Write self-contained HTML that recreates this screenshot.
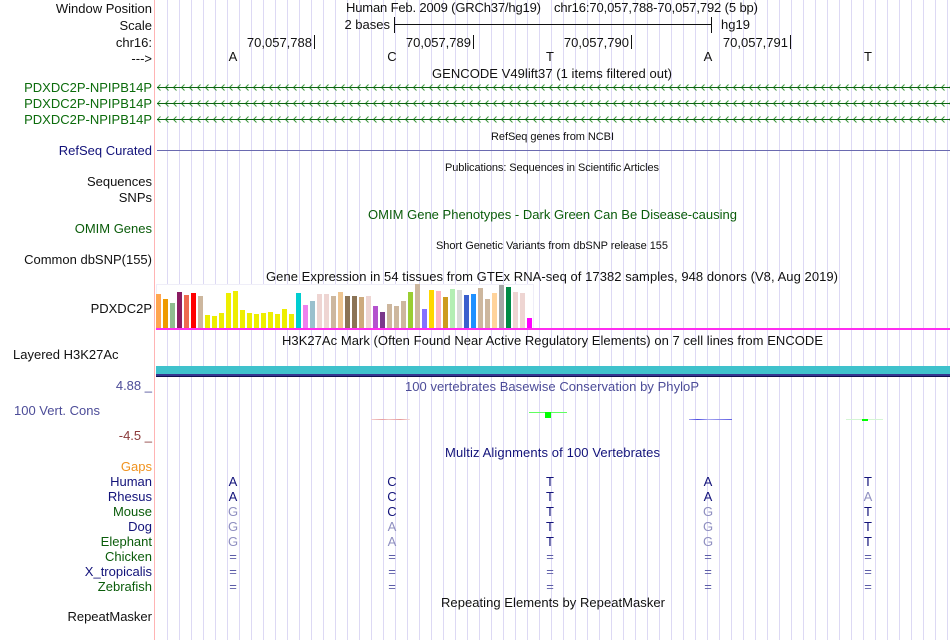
<!DOCTYPE html>
<html><head><meta charset="utf-8"><style>
html,body{margin:0;padding:0;background:#fff;width:950px;height:640px;overflow:hidden}
svg{display:block}
text{font-family:"Liberation Sans",sans-serif;font-size:13px}
.r{text-anchor:end}
.s{font-size:11px}
.k{fill:#111}.g{fill:#0b6b0b}.n{fill:#12127a}.d{fill:#0a5c0a}
.b{font-size:13px;text-anchor:middle}.h{fill:#12127a}.l{fill:#8f8fc0}.m{fill:#5c5ca8}
.c{text-anchor:middle}
</style></head><body>
<svg width="950" height="640" viewBox="0 0 950 640" xmlns="http://www.w3.org/2000/svg">
<defs>
<pattern id="grid" x="167" y="0" width="12" height="640" patternUnits="userSpaceOnUse"><rect x="0" y="0" width="1" height="640" fill="#ddd9f4"/></pattern>
<pattern id="arr" x="157" y="83" width="8" height="9" patternUnits="userSpaceOnUse"><path d="M3.5 1.5 L0.5 4.5 L3.5 7.5" fill="none" stroke="#3d963d" stroke-width="1"/></pattern>
<linearGradient id="rg"><stop offset="0" stop-color="#f4d0d0"/><stop offset=".3" stop-color="#e8a0a0"/><stop offset=".45" stop-color="#f0c4c4"/><stop offset=".75" stop-color="#e69a9a"/><stop offset="1" stop-color="#f8e0e0"/></linearGradient>
<linearGradient id="bg"><stop offset="0" stop-color="#a0a0f0"/><stop offset=".2" stop-color="#4c4ce0"/><stop offset=".45" stop-color="#a8a8f0"/><stop offset="1" stop-color="#6060e4"/></linearGradient>
</defs>
<rect width="950" height="640" fill="#fff"/>
<rect x="160" y="0" width="790" height="640" fill="url(#grid)"/>
<rect x="154" y="0" width="1" height="640" fill="#ffb4b4"/>

<!-- header -->
<text class="r k" x="152" y="13">Window Position</text>
<text class="r k" x="152" y="30">Scale</text>
<text class="r k" x="152" y="47">chr16:</text>
<text class="r k" x="152" y="63">---&gt;</text>
<text class="k" x="346" y="12" textLength="195">Human Feb. 2009 (GRCh37/hg19)</text>
<text class="k" x="554" y="12" textLength="204">chr16:70,057,788-70,057,792 (5 bp)</text>
<text class="r k" x="390" y="29">2 bases</text>
<rect x="394" y="24" width="318" height="1" fill="#111"/>
<rect x="394" y="17" width="1" height="16" fill="#111"/>
<rect x="711" y="17" width="1" height="16" fill="#111"/>
<text class="k" x="721" y="29">hg19</text>
<text class="r k" x="312" y="47">70,057,788</text><rect x="314" y="35" width="1" height="14" fill="#111"/>
<text class="r k" x="471" y="47">70,057,789</text><rect x="473" y="35" width="1" height="14" fill="#111"/>
<text class="r k" x="629" y="47">70,057,790</text><rect x="631" y="35" width="1" height="14" fill="#111"/>
<text class="r k" x="788" y="47">70,057,791</text><rect x="790" y="35" width="1" height="14" fill="#111"/>
<text class="c k" x="233" y="61">A</text><text class="c k" x="392" y="61">C</text><text class="c k" x="550" y="61">T</text><text class="c k" x="708" y="61">A</text><text class="c k" x="868" y="61">T</text>

<!-- gencode -->
<text class="k" x="432" y="78" textLength="240">GENCODE V49lift37 (1 items filtered out)</text>
<text class="r g" x="152" y="92">PDXDC2P-NPIPB14P</text>
<text class="r g" x="152" y="108">PDXDC2P-NPIPB14P</text>
<text class="r g" x="152" y="124">PDXDC2P-NPIPB14P</text>
<rect x="157" y="83" width="793" height="9" fill="url(#arr)"/>
<rect x="157" y="87" width="793" height="1" fill="#0b6410"/>
<g transform="translate(0,16)"><rect x="157" y="83" width="793" height="9" fill="url(#arr)"/><rect x="157" y="87" width="793" height="1" fill="#0b6410"/></g>
<g transform="translate(0,32)"><rect x="157" y="83" width="793" height="9" fill="url(#arr)"/><rect x="157" y="87" width="793" height="1" fill="#0b6410"/></g>

<!-- refseq -->
<text class="k s" x="491" y="140" textLength="123">RefSeq genes from NCBI</text>
<text class="r n" x="152" y="155">RefSeq Curated</text>
<rect x="157" y="150" width="793" height="1" fill="#6a6ab0"/>
<text class="k s" x="445" y="171" textLength="214">Publications: Sequences in Scientific Articles</text>
<text class="r k" x="152" y="186">Sequences</text>
<text class="r k" x="152" y="202">SNPs</text>
<text class="d" x="368" y="219" textLength="369">OMIM Gene Phenotypes - Dark Green Can Be Disease-causing</text>
<text class="r d" x="152" y="233">OMIM Genes</text>
<text class="k s" x="436" y="249" textLength="232">Short Genetic Variants from dbSNP release 155</text>
<text class="r k" x="152" y="264">Common dbSNP(155)</text>
<text class="k" x="266" y="281" textLength="572">Gene Expression in 54 tissues from GTEx RNA-seq of 17382 samples, 948 donors (V8, Aug 2019)</text>
<text class="r k" x="152" y="313">PDXDC2P</text>

<!-- bars -->
<rect x="156.5" y="284.5" width="377" height="44" fill="#fff" stroke="#efeef8" stroke-width="1"/>
<g>
<rect x="156" y="294" width="5" height="34" fill="#ffa54f"/>
<rect x="163" y="299" width="5" height="29" fill="#ee9a00"/>
<rect x="170" y="303" width="5" height="25" fill="#8fbc8f"/>
<rect x="177" y="292" width="5" height="36" fill="#8b1c62"/>
<rect x="184" y="295" width="5" height="33" fill="#ee6a50"/>
<rect x="191" y="293" width="5" height="35" fill="#ff0000"/>
<rect x="198" y="296" width="5" height="32" fill="#cdb79e"/>
<rect x="205" y="315" width="5" height="13" fill="#eeee00"/>
<rect x="212" y="316" width="5" height="12" fill="#eeee00"/>
<rect x="219" y="313" width="5" height="15" fill="#eeee00"/>
<rect x="226" y="293" width="5" height="35" fill="#eeee00"/>
<rect x="233" y="291" width="5" height="37" fill="#eeee00"/>
<rect x="240" y="310" width="5" height="18" fill="#eeee00"/>
<rect x="247" y="313" width="5" height="15" fill="#eeee00"/>
<rect x="254" y="314" width="5" height="14" fill="#eeee00"/>
<rect x="261" y="313" width="5" height="15" fill="#eeee00"/>
<rect x="268" y="312" width="5" height="16" fill="#eeee00"/>
<rect x="275" y="314" width="5" height="14" fill="#eeee00"/>
<rect x="282" y="309" width="5" height="19" fill="#eeee00"/>
<rect x="289" y="314" width="5" height="14" fill="#eeee00"/>
<rect x="296" y="293" width="5" height="35" fill="#00ced1"/>
<rect x="303" y="305" width="5" height="23" fill="#ee82ee"/>
<rect x="310" y="301" width="5" height="27" fill="#9ac0cd"/>
<rect x="317" y="294" width="5" height="34" fill="#eed5d2"/>
<rect x="324" y="294" width="5" height="34" fill="#eed5d2"/>
<rect x="331" y="296" width="5" height="32" fill="#cdb79e"/>
<rect x="338" y="292" width="5" height="36" fill="#eec591"/>
<rect x="345" y="296" width="5" height="32" fill="#8b7355"/>
<rect x="352" y="296" width="5" height="32" fill="#8b7355"/>
<rect x="359" y="297" width="5" height="31" fill="#cdaa7d"/>
<rect x="366" y="296" width="5" height="32" fill="#eed5d2"/>
<rect x="373" y="306" width="5" height="22" fill="#b452cd"/>
<rect x="380" y="312" width="5" height="16" fill="#7a378b"/>
<rect x="387" y="304" width="5" height="24" fill="#cdb79e"/>
<rect x="394" y="306" width="5" height="22" fill="#cdb79e"/>
<rect x="401" y="301" width="5" height="27" fill="#cdb79e"/>
<rect x="408" y="292" width="5" height="36" fill="#9acd32"/>
<rect x="415" y="284" width="5" height="44" fill="#cdb79e"/>
<rect x="422" y="309" width="5" height="19" fill="#8470ff"/>
<rect x="429" y="290" width="5" height="38" fill="#ffd700"/>
<rect x="436" y="291" width="5" height="37" fill="#ffb6c1"/>
<rect x="443" y="297" width="5" height="31" fill="#cd9b1d"/>
<rect x="450" y="289" width="5" height="39" fill="#b4eeb4"/>
<rect x="457" y="290" width="5" height="38" fill="#d9d9d9"/>
<rect x="464" y="295" width="5" height="33" fill="#3a5fcd"/>
<rect x="471" y="294" width="5" height="34" fill="#1e90ff"/>
<rect x="478" y="288" width="5" height="40" fill="#cdb79e"/>
<rect x="485" y="299" width="5" height="29" fill="#cdb79e"/>
<rect x="492" y="293" width="5" height="35" fill="#ffd39b"/>
<rect x="499" y="285" width="5" height="43" fill="#a6a6a6"/>
<rect x="506" y="287" width="5" height="41" fill="#008b45"/>
<rect x="513" y="292" width="5" height="36" fill="#eed5d2"/>
<rect x="520" y="293" width="5" height="35" fill="#eed5d2"/>
<rect x="527" y="318" width="5" height="10" fill="#ff00ff"/>
</g>
<rect x="156" y="328" width="794" height="2" fill="#ff2cf0"/>

<!-- H3K27Ac -->
<text class="k" x="282" y="345" textLength="541">H3K27Ac Mark (Often Found Near Active Regulatory Elements) on 7 cell lines from ENCODE</text>
<text class="k" x="13" y="359">Layered H3K27Ac</text>
<rect x="156" y="366" width="794" height="8" fill="#3fc2cc"/>
<rect x="156" y="374" width="794" height="2" fill="#35358f"/>
<rect x="156" y="376" width="794" height="1" fill="#101050"/>

<!-- conservation -->
<text class="r" x="152" y="390" fill="#4c4c98">4.88 _</text>
<text x="14" y="415" fill="#4c4c98" textLength="86">100 Vert. Cons</text>
<text class="r" x="152" y="440" fill="#8b3a3a">-4.5 _</text>
<text x="405" y="391" fill="#4c4c98" textLength="294">100 vertebrates Basewise Conservation by PhyloP</text>
<rect x="371" y="419" width="39" height="1" fill="url(#rg)"/>
<rect x="529" y="412" width="38" height="1" fill="#60ff60"/>
<rect x="545" y="412" width="6" height="6" fill="#00ff00"/>
<rect x="689" y="419" width="43" height="1" fill="url(#bg)"/>
<rect x="846" y="419" width="37" height="1" fill="#d4f5d4"/>
<rect x="862" y="419" width="6" height="2" fill="#00ff00"/>

<!-- multiz -->
<text class="n" x="445" y="457" textLength="215">Multiz Alignments of 100 Vertebrates</text>
<text class="r" x="152" y="471" fill="#f0921e">Gaps</text>
<text class="r n" x="152" y="486">Human</text>
<text class="r n" x="152" y="501">Rhesus</text>
<text class="r d" x="152" y="516">Mouse</text>
<text class="r n" x="152" y="531">Dog</text>
<text class="r d" x="152" y="546">Elephant</text>
<text class="r d" x="152" y="561">Chicken</text>
<text class="r n" x="152" y="576">X_tropicalis</text>
<text class="r d" x="152" y="591">Zebrafish</text>

<g>
<text class="b h" x="233" y="486">A</text><text class="b h" x="392" y="486">C</text><text class="b h" x="550" y="486">T</text><text class="b h" x="708" y="486">A</text><text class="b h" x="868" y="486">T</text>
<text class="b h" x="233" y="501">A</text><text class="b h" x="392" y="501">C</text><text class="b h" x="550" y="501">T</text><text class="b h" x="708" y="501">A</text><text class="b l" x="868" y="501">A</text>
<text class="b l" x="233" y="516">G</text><text class="b h" x="392" y="516">C</text><text class="b h" x="550" y="516">T</text><text class="b l" x="708" y="516">G</text><text class="b h" x="868" y="516">T</text>
<text class="b l" x="233" y="531">G</text><text class="b l" x="392" y="531">A</text><text class="b h" x="550" y="531">T</text><text class="b l" x="708" y="531">G</text><text class="b h" x="868" y="531">T</text>
<text class="b l" x="233" y="546">G</text><text class="b l" x="392" y="546">A</text><text class="b h" x="550" y="546">T</text><text class="b l" x="708" y="546">G</text><text class="b h" x="868" y="546">T</text>
<text class="b m" x="233" y="561">=</text><text class="b m" x="392" y="561">=</text><text class="b m" x="550" y="561">=</text><text class="b m" x="708" y="561">=</text><text class="b m" x="868" y="561">=</text>
<text class="b m" x="233" y="576">=</text><text class="b m" x="392" y="576">=</text><text class="b m" x="550" y="576">=</text><text class="b m" x="708" y="576">=</text><text class="b m" x="868" y="576">=</text>
<text class="b m" x="233" y="591">=</text><text class="b m" x="392" y="591">=</text><text class="b m" x="550" y="591">=</text><text class="b m" x="708" y="591">=</text><text class="b m" x="868" y="591">=</text>
</g>
<text class="k" x="441" y="607" textLength="224">Repeating Elements by RepeatMasker</text>
<text class="r k" x="152" y="621">RepeatMasker</text>
</svg>
</body></html>
